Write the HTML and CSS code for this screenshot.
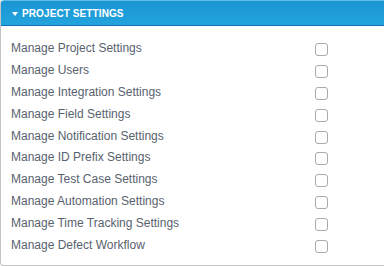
FILE: index.html
```html
<!DOCTYPE html>
<html>
<head>
<meta charset="utf-8">
<link rel="stylesheet" href="styles.css">
</head>
<body>
<div class="panel">
  <div class="panel-head">
    <span class="caret"></span>
    <span class="title">PROJECT SETTINGS</span>
  </div>
  <div class="panel-body">
    <div class="row"><span class="label">Manage Project Settings</span><span class="check"></span></div>
    <div class="row"><span class="label">Manage Users</span><span class="check"></span></div>
    <div class="row"><span class="label">Manage Integration Settings</span><span class="check"></span></div>
    <div class="row"><span class="label">Manage Field Settings</span><span class="check"></span></div>
    <div class="row"><span class="label">Manage Notification Settings</span><span class="check"></span></div>
    <div class="row"><span class="label">Manage ID Prefix Settings</span><span class="check"></span></div>
    <div class="row"><span class="label">Manage Test Case Settings</span><span class="check"></span></div>
    <div class="row"><span class="label">Manage Automation Settings</span><span class="check"></span></div>
    <div class="row"><span class="label">Manage Time Tracking Settings</span><span class="check"></span></div>
    <div class="row"><span class="label">Manage Defect Workflow</span><span class="check"></span></div>
  </div>
</div>
</body>
</html>
```
FILE: styles.css
```css
html, body {
  margin: 0;
  padding: 0;
  background: #ffffff;
  overflow: hidden;
}
body {
  font-family: "Liberation Sans", Arial, sans-serif;
}
.panel {
  width: 384px;
  height: 266px;
  box-sizing: border-box;
  border-left: 1px solid #c4c4c4;
  border-bottom: 1px solid #c4c4c4;
  border-radius: 4px 0 0 4px;
  overflow: hidden;
}
.panel-head {
  height: 24px;
  margin-left: -1px;
  border-top: 1px solid #5ebbea;
  border-bottom: 1px solid #1473b8;
  background: linear-gradient(#1a95d3, #22a4de);
  border-radius: 4px 0 0 0;
  display: flex;
  align-items: center;
  padding-left: 12px;
  gap: 4px;
}
.caret {
  width: 0;
  height: 0;
  border-left: 3px solid transparent;
  border-right: 3px solid transparent;
  border-top: 4px solid #ffffff;
  margin-top: 1px;
}
.title {
  color: #ffffff;
  font-weight: bold;
  font-size: 10px;
  letter-spacing: 0.1px;
}
.panel-body {
  padding-top: 11px;
}
.row {
  height: 21.9px;
  display: flex;
  align-items: center;
  padding-left: 10px;
}
.label {
  width: 304px;
  font-size: 12px;
  color: #58626e;
}
.check {
  width: 11px;
  height: 11px;
  margin-top: 3px;
  border: 1px solid #aaaaaa;
  border-radius: 3px;
  background: #fff;
}
```
